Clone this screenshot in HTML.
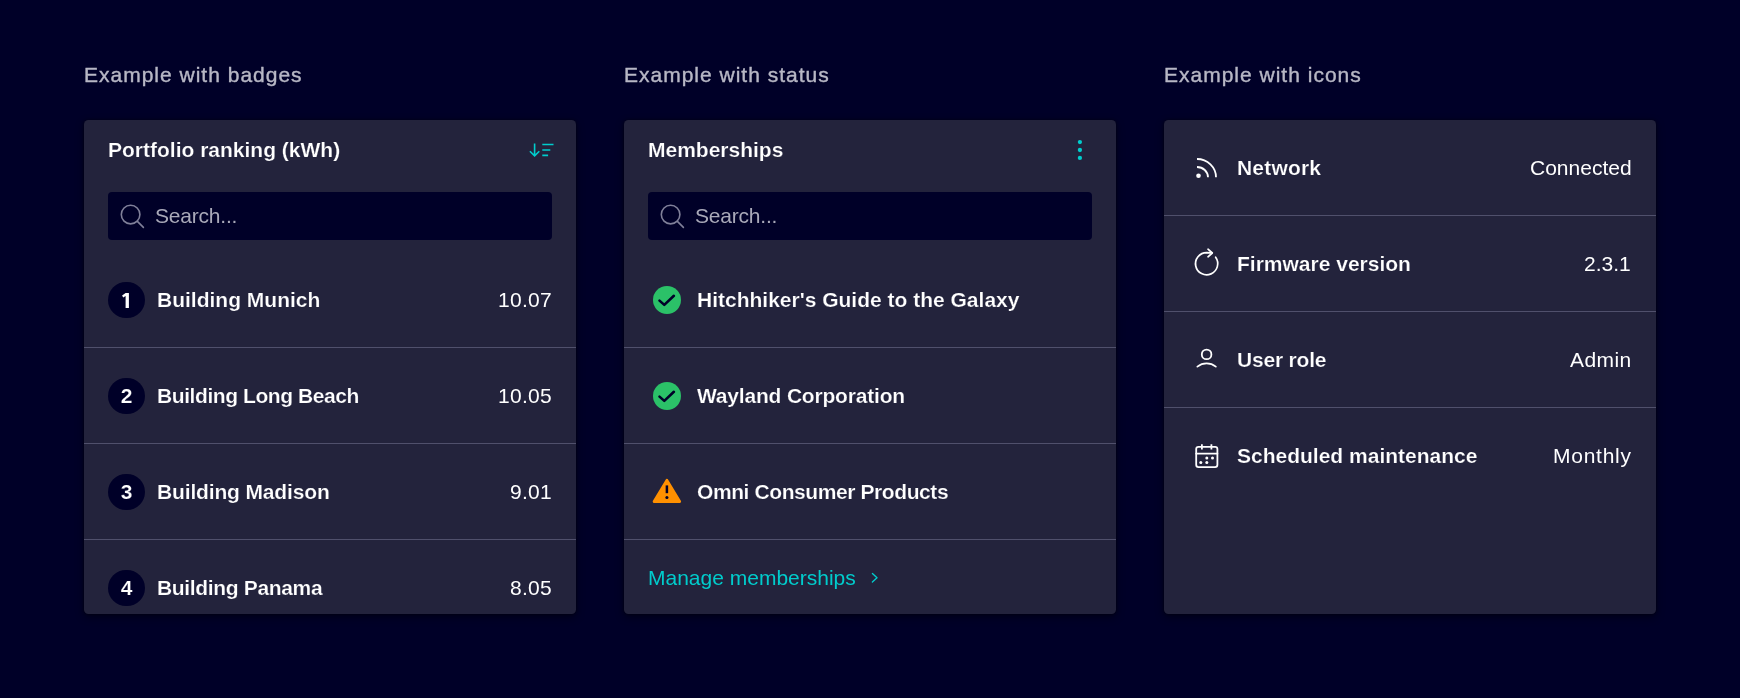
<!DOCTYPE html>
<html>
<head>
<meta charset="utf-8">
<style>
html,body{margin:0;padding:0;}
body{width:1740px;height:698px;background:#000028;position:relative;overflow:hidden;font-family:"Liberation Sans",sans-serif;color:#fff;}
.t{position:absolute;white-space:nowrap;font-size:21px;line-height:24px;will-change:transform;}
.h{color:#b7b7c5;letter-spacing:1px;-webkit-text-stroke:0.4px #b7b7c5;}
.b{font-weight:700;-webkit-text-stroke:0.2px #23233c;}
.badge .b{-webkit-text-stroke:0.2px #000028;}
.card{position:absolute;top:120px;width:492px;height:493.5px;background:#23233c;border-radius:4.5px;box-shadow:0 0 3px rgba(0,0,0,.4),0 3px 8px rgba(0,0,0,.45);}
.div{position:absolute;left:0;right:0;height:1px;background:#50506c;}
.search{position:absolute;left:24px;top:72px;width:444px;height:48px;background:#000028;border-radius:4px;}
.r{text-align:right;}
.badge{position:absolute;left:24px;width:37px;height:36px;border-radius:18px;background:#000028;}
svg{position:absolute;overflow:visible;}
</style>
</head>
<body>
<div class="t h" style="left:84px;top:62.5px;">Example with badges</div>
<div class="t h" style="left:624px;top:63px;">Example with status</div>
<div class="t h" style="left:1164px;top:63px;">Example with icons</div>

<!-- Card 1 -->
<div class="card" style="left:84px;">
  <div class="t b" style="left:24px;top:18px;">Portfolio ranking (kWh)</div>
  <svg style="left:0;top:0" width="492" height="60">
    <g stroke="#00cccc" stroke-width="1.6" fill="none" stroke-linecap="butt" stroke-linejoin="miter">
      <path d="M450.6 23.6v12.2M445.9 31.2l4.7 4.7l4.7-4.7"/>
      <path d="M458.3 24.5h11.2M458.3 30h8M458.3 35.4h5.8"/>
    </g>
  </svg>
  <div class="search">
    <svg style="left:0;top:0" width="60" height="48">
      <g stroke="#80809a" stroke-width="1.6" fill="none" stroke-linecap="round">
        <circle cx="22.6" cy="22.6" r="9.3"/>
        <path d="M29.4 29.4l6 6"/>
      </g>
    </svg>
    <div class="t" style="left:47px;top:12px;color:#a9a9b9;letter-spacing:-0.2px;">Search...</div>
  </div>
  <div class="badge" style="top:162px;"><svg style="left:0;top:0" width="37" height="36"><path d="M17.6 10.9H20.9V26H17.6V13.9L15.2 15.6L14.1 13.4Z" fill="#fff"/></svg></div>
  <div class="t b" style="left:73px;top:168px;">Building Munich</div>
  <div class="t r" style="right:24px;top:168px;letter-spacing:0.3px;">10.07</div>
  <div class="div" style="top:227px;"></div>
  <div class="badge" style="top:258px;"><div class="t b" style="left:0;width:37px;text-align:center;top:6px;">2</div></div>
  <div class="t b" style="left:73px;top:264px;letter-spacing:-0.42px;">Building Long Beach</div>
  <div class="t r" style="right:24px;top:264px;letter-spacing:0.3px;">10.05</div>
  <div class="div" style="top:323px;"></div>
  <div class="badge" style="top:354px;"><div class="t b" style="left:0;width:37px;text-align:center;top:6px;">3</div></div>
  <div class="t b" style="left:73px;top:360px;letter-spacing:-0.15px;">Building Madison</div>
  <div class="t r" style="right:24px;top:360px;letter-spacing:0.3px;">9.01</div>
  <div class="div" style="top:419px;"></div>
  <div class="badge" style="top:450px;"><div class="t b" style="left:0;width:37px;text-align:center;top:6px;">4</div></div>
  <div class="t b" style="left:73px;top:456px;letter-spacing:-0.34px;">Building Panama</div>
  <div class="t r" style="right:24px;top:456px;letter-spacing:0.3px;">8.05</div>
</div>

<!-- Card 2 -->
<div class="card" style="left:624px;">
  <div class="t b" style="left:24px;top:18px;">Memberships</div>
  <svg style="left:0;top:0" width="492" height="60">
    <g fill="#00cccc">
      <circle cx="455.9" cy="22.1" r="2.15"/>
      <circle cx="455.9" cy="30" r="2.15"/>
      <circle cx="455.9" cy="37.9" r="2.15"/>
    </g>
  </svg>
  <div class="search">
    <svg style="left:0;top:0" width="60" height="48">
      <g stroke="#80809a" stroke-width="1.6" fill="none" stroke-linecap="round">
        <circle cx="22.6" cy="22.6" r="9.3"/>
        <path d="M29.4 29.4l6 6"/>
      </g>
    </svg>
    <div class="t" style="left:47px;top:12px;color:#a9a9b9;letter-spacing:-0.2px;">Search...</div>
  </div>
  <svg style="left:0;top:160px" width="80" height="40">
    <circle cx="43" cy="20" r="14" fill="#2bc168"/>
    <path d="M35.5 20.6l4.8 4.3l9.6-9.1" stroke="#000028" stroke-width="2.6" fill="none" stroke-linecap="round" stroke-linejoin="round"/>
  </svg>
  <div class="t b" style="left:73px;top:168px;">Hitchhiker's Guide to the Galaxy</div>
  <div class="div" style="top:227px;"></div>
  <svg style="left:0;top:256px" width="80" height="40">
    <circle cx="43" cy="20" r="14" fill="#2bc168"/>
    <path d="M35.5 20.6l4.8 4.3l9.6-9.1" stroke="#000028" stroke-width="2.6" fill="none" stroke-linecap="round" stroke-linejoin="round"/>
  </svg>
  <div class="t b" style="left:73px;top:264px;letter-spacing:-0.19px;">Wayland Corporation</div>
  <div class="div" style="top:323px;"></div>
  <svg style="left:0;top:352px" width="80" height="40">
    <path d="M42.9 8.4L55.6 29.5H30.2Z" fill="#ff9000" stroke="#ff9000" stroke-width="3" stroke-linejoin="round"/>
    <path d="M42.9 13.4v7.8" stroke="#000028" stroke-width="2.5" stroke-linecap="butt"/>
    <circle cx="42.9" cy="25.5" r="1.55" fill="#000028"/>
  </svg>
  <div class="t b" style="left:73px;top:360px;letter-spacing:-0.41px;">Omni Consumer Products</div>
  <div class="div" style="top:419px;"></div>
  <div class="t" style="left:24px;top:446px;color:#00cccc;">Manage memberships</div>
  <svg style="left:0;top:440px" width="300" height="40">
    <path d="M248.4 13.6L253 17.8L248.4 22" stroke="#00cccc" stroke-width="1.4" fill="none" stroke-linecap="round" stroke-linejoin="round"/>
  </svg>
</div>

<!-- Card 3 -->
<div class="card" style="left:1164px;">
  <svg style="left:0;top:0" width="80" height="100">
    <g stroke="#fff" stroke-width="1.8" fill="none" stroke-linecap="butt">
      <path d="M33 39A19 18.3 0 0 1 52 57.3"/>
      <path d="M33 47A11 10.3 0 0 1 44 57.3"/>
    </g>
    <circle cx="34.5" cy="55.8" r="2.3" fill="#fff"/>
  </svg>
  <div class="t b" style="left:73px;top:36px;letter-spacing:0.2px;">Network</div>
  <div class="t r" style="right:24px;top:36px;">Connected</div>
  <div class="div" style="top:95px;"></div>
  <svg style="left:0;top:96px" width="80" height="96">
    <g stroke="#fff" stroke-width="1.7" fill="none" stroke-linecap="round" stroke-linejoin="round">
      <path d="M51.64 41.25A11.1 11.1 0 1 1 42.6 36.6L48.1 36.9"/>
      <path d="M44 33.2L48.3 37L44 40.8"/>
    </g>
  </svg>
  <div class="t b" style="left:73px;top:132px;">Firmware version</div>
  <div class="t r" style="right:25px;top:132px;">2.3.1</div>
  <div class="div" style="top:191px;"></div>
  <svg style="left:0;top:192px" width="80" height="96">
    <g stroke="#fff" stroke-width="1.8" fill="none" stroke-linecap="round">
      <circle cx="42.6" cy="42.4" r="4.8"/>
      <path d="M33.4 54.6A15 15 0 0 1 51.8 54.6"/>
    </g>
  </svg>
  <div class="t b" style="left:73px;top:228px;letter-spacing:-0.19px;">User role</div>
  <div class="t r" style="right:24px;top:228px;letter-spacing:0.4px;">Admin</div>
  <div class="div" style="top:287px;"></div>
  <svg style="left:0;top:288px" width="80" height="96">
    <g stroke="#fff" stroke-width="1.8" fill="none" stroke-linecap="round" stroke-linejoin="round">
      <rect x="32.2" y="38.8" width="21.2" height="20.3" rx="2.3"/>
      <path d="M32.2 45.6h21.2"/>
      <path d="M37.9 36.3v5.3M47.4 36.3v5.3" stroke-linecap="butt"/>
    </g>
    <g fill="#fff">
      <circle cx="42.8" cy="49.9" r="1.5"/>
      <circle cx="48.5" cy="49.9" r="1.5"/>
      <circle cx="36.8" cy="54.4" r="1.5"/>
      <circle cx="42.8" cy="54.4" r="1.5"/>
    </g>
  </svg>
  <div class="t b" style="left:73px;top:324px;">Scheduled maintenance</div>
  <div class="t r" style="right:24px;top:324px;letter-spacing:0.75px;">Monthly</div>
</div>
</body>
</html>
